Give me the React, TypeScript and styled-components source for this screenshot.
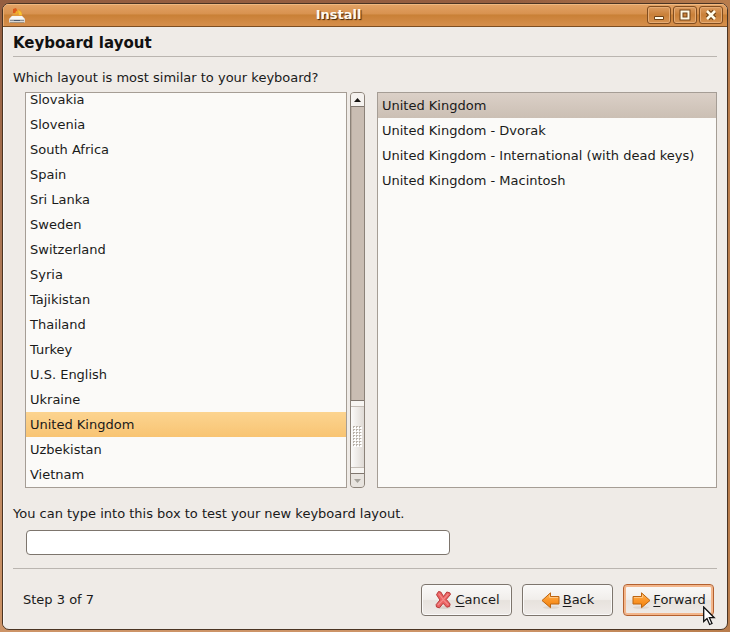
import React, { useLayoutEffect, useRef, useState } from "react";
import styled, { createGlobalStyle, css } from "styled-components";

const Global = createGlobalStyle`
  * { box-sizing: border-box; }
  body {
    margin: 0;
    font-family: "DejaVu Sans", Verdana, sans-serif;
    font-size: 13px;
    line-height: 16px;
    color: #1a1a1a;
  }
  button, input { font: inherit; color: inherit; }
`;

const Desktop = styled.div`
  position: relative;
  height: 100vh;
  min-height: 400px;
  padding: 3px 2px 2px;
  background: linear-gradient(90deg, rgba(170, 108, 70, 0) 70%, #b87c4c), linear-gradient(#945e40, #b98460 60%, #cd9467);
`;

const Window = styled.main`
  display: flex;
  flex-direction: column;
  height: 100%;
  overflow: hidden;
  border: 1px solid #4a3423;
  border-radius: 7px;
  background: #efebe7;
`;

const TitleBar = styled.header`
  display: grid;
  grid-template-columns: 18px 1fr 76px;
  gap: 4px;
  align-items: center;
  height: 23px;
  flex: none;
  padding: 0 4px 0 5px;
  border-bottom: 1px solid #7d4e22;
  box-shadow: inset 0 1px #f0b981, inset 1px 0 #e9ae74;
  background: linear-gradient(#e3a366, #d8924f 45%, #c98036 50%, #d68f4c);
`;

const WindowTitle = styled.div`
  padding-left: 4px;
  text-align: center;
  font-weight: bold;
  color: #fffaf0;
  text-shadow: 1px 1px 1px #3c2208;
`;

const WindowControls = styled.div`
  display: flex;
  justify-content: flex-end;
  gap: 2px;
`;

const ControlButton = styled.button`
  display: flex;
  align-items: center;
  justify-content: center;
  width: 24px;
  height: 18px;
  padding: 0;
  border: 1px solid #804d20;
  border-radius: 3px;
  box-shadow: inset 0 0 0 1px #e5ab73;
  background: linear-gradient(#dc9c61, #c98038 50%, #d79352);
`;

const Content = styled.div`
  display: flex;
  flex: 1;
  flex-direction: column;
  min-height: 0;
  padding: 6px 10px 13px;
  box-shadow: inset 1px 0 #faf8f6;
`;

const Heading = styled.h1`
  margin: 0;
  padding-bottom: 3px;
  border-bottom: 1px solid #bab5b0;
  font-size: 15px;
  line-height: 20px;
  color: #111;
`;

const Question = styled.p`
  margin: 13px 0 6px;
`;

const Panes = styled.div`
  display: grid;
  grid-template-columns: 325fr 15px 352fr;
  flex: 1;
  min-height: 0;
  padding-left: 12px;
`;

const ListBox = styled.ul`
  min-height: 0;
  margin: 0;
  padding: 0;
  overflow-y: auto;
  scrollbar-width: none;
  list-style: none;
  border: 1px solid #a59d95;
  background: #fbfaf8;
`;

const CountryList = styled(ListBox)`
  margin-right: 3px;
`;

const VariantList = styled(ListBox)`
  margin-left: 12px;
`;

const Row = styled.li<{ $tone?: "active" | "muted" }>`
  height: 25px;
  padding: 0 4px;
  line-height: 25px;
  white-space: nowrap;
  ${({ $tone }) => $tone === "active" && css`background: linear-gradient(#fcd490, #f8c473);`}
  ${({ $tone }) => $tone === "muted" && css`background: linear-gradient(#dbd0c7, #cbbfb4);`}
`;

const Scrollbar = styled.div`
  display: flex;
  flex-direction: column;
  border: 1px solid #8b8279;
  border-radius: 4px;
  overflow: hidden;
  background: #c9bdb3;
`;

const Stepper = styled.button`
  display: flex;
  align-items: center;
  justify-content: center;
  height: 13px;
  flex: none;
  padding: 0;
  border: 0;
  background: #f5f2ef;
  &:disabled { background: #e8e4df; }
`;

const Track = styled.div`
  display: flex;
  flex: 1;
  flex-direction: column;
  justify-content: flex-end;
  border-top: 1px solid #7f766e;
  border-bottom: 1px solid #7f766e;
  box-shadow: inset 1px 0 #b3a69b;
`;

const Thumb = styled.div`
  display: flex;
  align-items: center;
  height: 20%;
  padding: 5px 0;
  border-top: 1px solid #7f766e;
  background: #f7f5f2;
`;

const Grip = styled.div`
  display: flex;
  align-items: center;
  justify-content: center;
  width: 100%;
  height: 100%;
  border-top: 1px solid #c4bdb6;
  border-bottom: 1px solid #c4bdb6;
  background: linear-gradient(90deg, #fbfaf9, #dfdad5);
`;

const TestLabel = styled.label`
  margin-top: 18px;
`;

const TestInput = styled.input`
  width: calc(60% + 2px);
  height: 25px;
  margin: 8px 0 13px 13px;
  padding: 0 6px;
  border: 1px solid #7d756d;
  border-radius: 4px;
  background: #fff;
`;

const Footer = styled.footer`
  display: flex;
  align-items: center;
  gap: 10px;
  padding: 15px 3px 0 10px;
  border-top: 1px solid #bab5b0;
`;

const StepText = styled.span`
  flex: 1;
`;

const ActionButton = styled.button<{ $primary?: boolean }>`
  display: flex;
  align-items: center;
  justify-content: center;
  gap: 2px;
  width: 91px;
  height: 32px;
  padding: 0;
  border: 1px solid #7d756d;
  border-radius: 4px;
  box-shadow: inset 0 0 0 1px #fbfaf9;
  background: linear-gradient(#faf9f8, #f1eeeb 48%, #e7e2dd 52%, #efebe8);
  ${({ $primary }) =>
    $primary &&
    css`
      border-color: #b3602f;
      box-shadow: inset 0 0 0 2px #f3b68b;
    `}
  u { text-underline-offset: 2px; }
`;

const Pointer = styled.svg`
  position: absolute;
  right: 14px;
  bottom: 6px;
  pointer-events: none;
`;

const countries = [
  "Slovakia", "Slovenia", "South Africa", "Spain", "Sri Lanka", "Sweden",
  "Switzerland", "Syria", "Tajikistan", "Thailand", "Turkey", "U.S. English",
  "Ukraine", "United Kingdom", "Uzbekistan", "Vietnam",
];

const variants = [
  "United Kingdom",
  "United Kingdom - Dvorak",
  "United Kingdom - International (with dead keys)",
  "United Kingdom - Macintosh",
];

const InstallerIcon = () => (
  <svg width="18" height="18" viewBox="0 0 18 18" aria-hidden="true">
    <path d="M4 10 5 7l2-3 5-1 2 3v4z" fill="#e39a3d" />
    <path d="M5 3l3-1 1 2-1 3H5z" fill="#dc5a1c" />
    <path d="M10 4l3 2 1 3h-3z" fill="#f7c52f" />
    <path d="M8 5l2 1-1 2H7z" fill="#f4ae25" />
    <path d="M4 10h10l3 3v3l-1 1H2l-1-1v-3z" fill="#d9d8d5" />
    <path d="M4 10h10l2.500 3h-15z" fill="#f7f6f4" />
    <path d="M2 14.5h14" stroke="#8c8e92" />
    <path d="M6 14.500h6" stroke="#4a5b70" />
    <path d="M2 16.500h14" stroke="#a3927f" />
  </svg>
);

const CancelIcon = () => (
  <svg width="20" height="20" viewBox="0 0 20 20" aria-hidden="true">
    <ellipse cx="11" cy="17.500" rx="7" ry="1.500" fill="#d8d2cc" />
    <path
      d="M5.500 1.500 7.800 2l2.700 4.500L13.800 2l3 .8.7 1.600-4.200 5 3.800 4.600-.5 2.400-2.800.8-3.700-3.900-3.600 4.500-3-.8-.4-2.300L6.900 10 3.500 4.700z"
      fill="#ea6262" stroke="#b83a3a" strokeLinejoin="round"
    />
    <path d="M5.700 3.500 10.300 9.700 4.800 15M15.300 3.800 10.300 9.700l5 5.200" fill="none" stroke="#f58a8a" strokeWidth="1.200" />
  </svg>
);

const ArrowIcon = ({ back = false }: { back?: boolean }) => (
  <svg width="20" height="20" viewBox="0 0 20 20" aria-hidden="true">
    <defs>
      <linearGradient id={back ? "arrow-back" : "arrow-forward"} x1="0" y1="0" x2="0" y2="1">
        <stop offset="0" stopColor="#ffb85c" />
        <stop offset="0.5" stopColor="#fb9629" />
        <stop offset="1" stopColor="#f28109" />
      </linearGradient>
    </defs>
    <g transform={back ? "translate(20 0) scale(-1 1)" : undefined}>
      <ellipse cx="10" cy="17.5" rx="8" ry="1.3" fill="#ddd6cf" />
      <path
        d="M2 6.5h8.500V2.800L19 10.500l-8.500 7.200v-3.700H2z"
        fill={back ? "url(#arrow-back)" : "url(#arrow-forward)"}
        stroke="#bd6410" strokeLinejoin="round"
      />
      <path d="M3 7.500h8.500V5" fill="none" stroke="#ffc682" />
    </g>
  </svg>
);

const gripDots = Array.from({ length: 21 }, (_, i) => ({ x: (i % 3) * 3, y: Math.floor(i / 3) * 3 }));

export default function App() {
  const countryRef = useRef<HTMLUListElement>(null);
  const [country, setCountry] = useState("United Kingdom");
  const [variant, setVariant] = useState("United Kingdom");
  const [sample, setSample] = useState("");

  useLayoutEffect(() => {
    const list = countryRef.current;
    if (list) list.scrollTop = list.scrollHeight;
  }, []);

  const scrollList = (amount: number) => countryRef.current?.scrollBy({ top: amount });

  return (
    <Desktop>
      <Global />
      <Window>
        <TitleBar>
          <InstallerIcon />
          <WindowTitle>Install</WindowTitle>
          <WindowControls>
            <ControlButton aria-label="Minimize">
              <svg width="12" height="12" viewBox="0 0 12 12"><path d="M1.500 7.500h9v3h-9z" fill="#fffbe9" stroke="#704114" /></svg>
            </ControlButton>
            <ControlButton aria-label="Maximize">
              <svg width="12" height="12" viewBox="0 0 12 12"><path d="M2.500 2.500h7v7h-7z" fill="none" stroke="#704114" strokeWidth="4" /><path d="M2.500 2.500h7v7h-7z" fill="none" stroke="#fffbe9" strokeWidth="2" /></svg>
            </ControlButton>
            <ControlButton aria-label="Close">
              <svg width="12" height="12" viewBox="0 0 12 12"><path d="m2.500 2.500 7 7m0-7-7 7" stroke="#704114" strokeWidth="5" /><path d="m2 2 8 8m0-8-8 8" stroke="#fffbe9" strokeWidth="2.500" /></svg>
            </ControlButton>
          </WindowControls>
        </TitleBar>
        <Content>
          <Heading>Keyboard layout</Heading>
          <Question>Which layout is most similar to your keyboard?</Question>
          <Panes>
            <CountryList ref={countryRef} role="listbox" aria-label="Keyboard country" tabIndex={0}>
              {countries.map((name) => (
                <Row key={name} role="option" aria-selected={name === country} $tone={name === country ? "active" : undefined} onClick={() => setCountry(name)}>
                  {name}
                </Row>
              ))}
            </CountryList>
            <Scrollbar>
              <Stepper aria-label="Scroll up" onClick={() => scrollList(-25)}>
                <svg width="7" height="4" viewBox="0 0 7 4"><path d="M0 4 3.500 0 7 4z" fill="#161412" /></svg>
              </Stepper>
              <Track>
                <Thumb>
                  <Grip>
                    <svg width="9" height="21" viewBox="0 0 9 21" aria-hidden="true">
                      {gripDots.map(({ x, y }) => (
                        <g key={`${x}-${y}`}>
                          <rect x={x} y={y} width="2" height="2" fill="#b9b2aa" />
                          <rect x={x + 1} y={y + 1} width="2" height="2" fill="#fff" />
                        </g>
                      ))}
                    </svg>
                  </Grip>
                </Thumb>
              </Track>
              <Stepper aria-label="Scroll down" disabled>
                <svg width="7" height="4" viewBox="0 0 7 4"><path d="M0 0h7L3.500 4z" fill="#a5a29b" /></svg>
              </Stepper>
            </Scrollbar>
            <VariantList role="listbox" aria-label="Keyboard variant" tabIndex={0}>
              {variants.map((name) => (
                <Row key={name} role="option" aria-selected={name === variant} $tone={name === variant ? "muted" : undefined} onClick={() => setVariant(name)}>
                  {name}
                </Row>
              ))}
            </VariantList>
          </Panes>
          <TestLabel htmlFor="layout-test">You can type into this box to test your new keyboard layout.</TestLabel>
          <TestInput id="layout-test" value={sample} onChange={(event) => setSample(event.target.value)} />
          <Footer>
            <StepText>Step 3 of 7</StepText>
            <ActionButton><CancelIcon /><span><u>C</u>ancel</span></ActionButton>
            <ActionButton><ArrowIcon back /><span><u>B</u>ack</span></ActionButton>
            <ActionButton $primary><ArrowIcon /><span><u>F</u>orward</span></ActionButton>
          </Footer>
        </Content>
      </Window>
      <Pointer width="13" height="20" viewBox="0 0 13 20" aria-hidden="true">
        <path d="M.7 1v14.500l3.300-3 2.600 6 2.400-1-2.600-5.800h4.800z" fill="#fff" stroke="#111" strokeWidth="1.300" />
      </Pointer>
    </Desktop>
  );
}
